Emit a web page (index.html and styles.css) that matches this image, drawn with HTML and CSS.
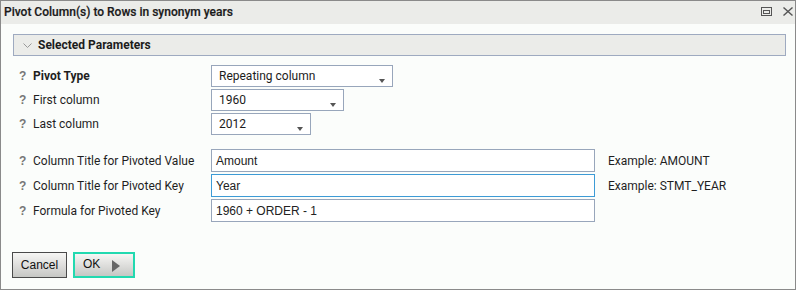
FILE: index.html
```html
<!DOCTYPE html>
<html lang="en">
<head>
  <meta charset="UTF-8">
  <title>Pivot Column(s) to Rows</title>
  <link rel="stylesheet" href="styles.css">
</head>
<body>
  <div class="dialog">
    <div class="titlebar">
      <span class="title">Pivot Column(s) to Rows in synonym years</span>
      <div class="tools">
        <svg width="11" height="9" viewBox="0 0 11 9"><rect x="0.5" y="0.5" width="10" height="8" fill="none" stroke="#555"/><rect x="2.5" y="3.5" width="6" height="3" fill="none" stroke="#555"/></svg>
        <svg width="10" height="9" viewBox="0 0 10 9"><path d="M0.5 0.5 L9.5 8.5 M9.5 0.5 L0.5 8.5" stroke="#555" stroke-width="1.4"/></svg>
      </div>
    </div>

    <div class="content">
      <div class="section-head">
        <svg class="chevron" width="9" height="5" viewBox="0 0 9 5"><path d="M0.5 0.5 L4.5 4.5 L8.5 0.5" fill="none" stroke="#999"/></svg>
        Selected Parameters
      </div>

      <div class="param-group">
        <span class="help">?</span>
        <span class="label strong">Pivot Type</span>
        <div class="select wide"><span>Repeating column</span><i class="caret"></i></div>
        <span></span>

        <span class="help">?</span>
        <span class="label">First column</span>
        <div class="select mid"><span>1960</span><i class="caret"></i></div>
        <span></span>

        <span class="help">?</span>
        <span class="label">Last column</span>
        <div class="select small"><span>2012</span><i class="caret"></i></div>
        <span></span>
      </div>

      <div class="param-group text-group">
        <span class="help">?</span>
        <span class="label">Column Title for Pivoted Value</span>
        <div class="field">Amount</div>
        <span class="example">Example: AMOUNT</span>

        <span class="help">?</span>
        <span class="label">Column Title for Pivoted Key</span>
        <div class="field focused">Year</div>
        <span class="example">Example: STMT_YEAR</span>

        <span class="help">?</span>
        <span class="label">Formula for Pivoted Key</span>
        <div class="field">1960 + ORDER - 1</div>
        <span></span>
      </div>

      <div class="actions">
        <button class="btn">Cancel</button>
        <button class="btn ok">OK <i class="play"></i></button>
      </div>
    </div>
  </div>
</body>
</html>
```

FILE: styles.css
```css
body {
  margin: 0;
  font-family: Roboto, "Liberation Sans", Arial, sans-serif;
  font-size: 12px;
  color: #1f1f1f;
}
.dialog {
  box-sizing: border-box;
  width: 796px;
  height: 290px;
  border: 1px solid #8a8a8a;
  background: #fbfdfb;
}
.titlebar {
  height: 23px;
  background: #ebece9;
  display: flex;
  align-items: center;
  justify-content: space-between;
  padding: 0 2px 0 3px;
}
.title {
  font-weight: 500;
  font-size: 12px;
  color: #1a1a1a;
  margin-top: -1px;
  -webkit-text-stroke: 0.2px #1a1a1a;
}
.tools {
  display: flex;
  align-items: center;
  gap: 11px;
  margin-top: -2px;
}
.content {
  padding: 10px 9px 0 12px;
}
.section-head {
  box-sizing: border-box;
  height: 22px;
  border: 1px solid #9eaac0;
  background: #ebece9;
  display: flex;
  align-items: center;
  font-weight: 700;
  color: #1c1c1c;
  padding-left: 9px;
}
.chevron {
  margin-right: 6px;
  margin-top: 1px;
}
.param-group {
  display: grid;
  grid-template-columns: 15px 178px 384px auto;
  grid-auto-rows: 22px;
  row-gap: 2px;
  align-items: center;
  margin: 9px 0 0 5px;
}
.text-group {
  grid-auto-rows: 23px;
  margin-top: 14px;
}
.help {
  font-family: "Liberation Sans", Arial, sans-serif;
  font-weight: bold;
  color: #777;
  font-size: 12px;
  padding-left: 1px;
}
.label.strong {
  font-weight: 700;
}
.select {
  box-sizing: border-box;
  height: 22px;
  border: 1px solid #98a6bb;
  background: #fff;
  display: flex;
  align-items: center;
  justify-content: space-between;
  padding: 0 7px;
  color: #1c1c1c;
}
.select.wide { width: 182px; }
.select.mid { width: 133px; }
.select.small { width: 100px; }
.caret {
  width: 0;
  height: 0;
  border-left: 3.5px solid transparent;
  border-right: 3.5px solid transparent;
  border-top: 4px solid #555;
  margin-top: 9px;
}
.field {
  box-sizing: border-box;
  height: 23px;
  width: 384px;
  border: 1px solid #98a6bb;
  background: #fff;
  display: flex;
  align-items: center;
  padding-left: 4px;
  font-family: "Liberation Sans", Arial, sans-serif;
  font-size: 12px;
  color: #222;
}
.field.focused {
  border-color: #3d9bd6;
}
.example {
  padding-left: 13px;
  white-space: nowrap;
}
.actions {
  display: flex;
  gap: 6px;
  margin: 30px 0 0 -1px;
}
.btn {
  box-sizing: border-box;
  height: 26px;
  width: 55px;
  border: 1px solid #4a4a4a;
  background: linear-gradient(#f6f6f4, #dcdcda 55%, #c6c7c4);
  font-family: "Liberation Sans", Arial, sans-serif;
  font-size: 12px;
  color: #111;
  padding: 0;
  display: flex;
  align-items: center;
  justify-content: center;
}
.btn.ok {
  width: 62px;
  border: 2px solid #22d9b0;
  justify-content: flex-start;
  padding: 0 0 2px 8px;
}
.play {
  width: 0;
  height: 0;
  border-top: 6.5px solid transparent;
  border-bottom: 6.5px solid transparent;
  border-left: 8px solid #666;
  margin-left: 12px;
  margin-top: 4px;
}
```
